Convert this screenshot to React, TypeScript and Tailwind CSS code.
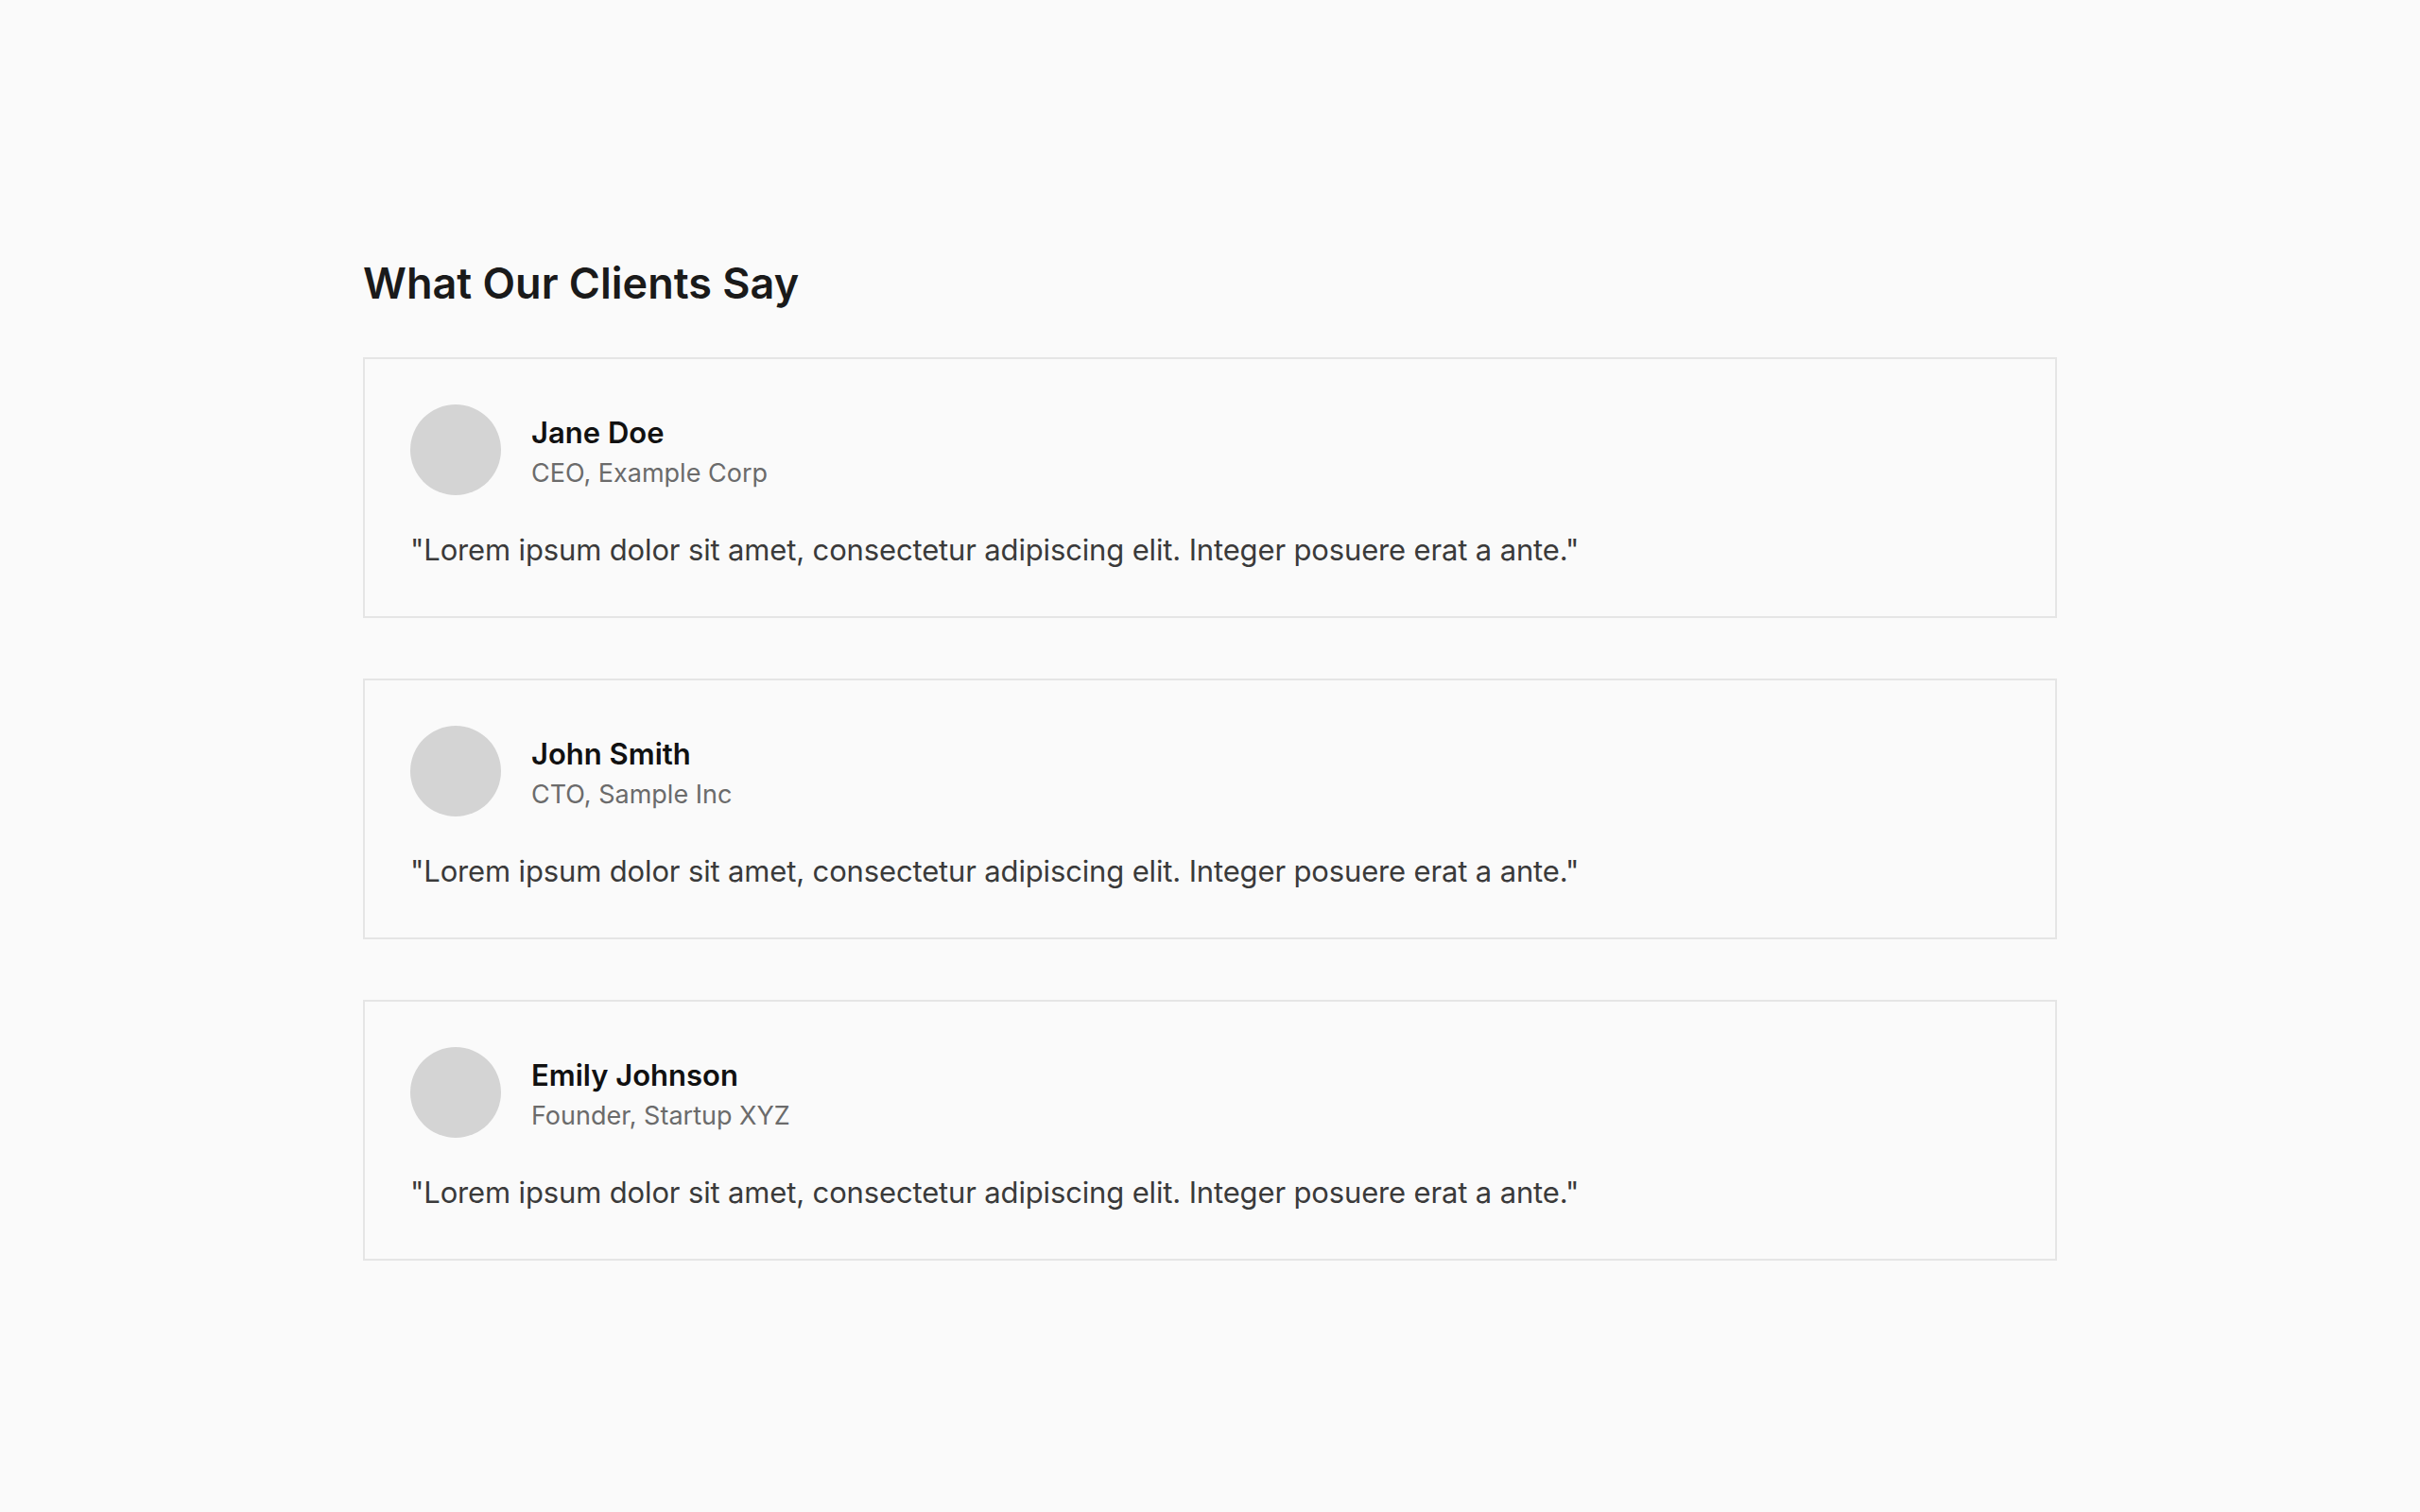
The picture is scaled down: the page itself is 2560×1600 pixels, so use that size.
const testimonials = [
  { name: 'Jane Doe', role: 'CEO, Example Corp' },
  { name: 'John Smith', role: 'CTO, Sample Inc' },
  { name: 'Emily Johnson', role: 'Founder, Startup XYZ' },
];

const quote =
  '"Lorem ipsum dolor sit amet, consectetur adipiscing elit. Integer posuere erat a ante."';

export default function App() {
  return (
    <div
      className="flex min-h-screen items-center justify-center bg-[#fafafa] pt-[3px]"
      style={{ fontFamily: 'Inter, "Noto Sans", sans-serif' }}
    >
      <section className="w-[1792px]">
        <h2 className="mb-12 text-[45px] font-semibold leading-[60px] text-[#1a1a1a]">
          What Our Clients Say
        </h2>
        <div className="flex flex-col gap-16">
          {testimonials.map((t) => (
            <div key={t.name} className="border-2 border-[#e5e5e5] px-12 pb-[46px] pt-12">
              <div className="flex items-center gap-8">
                <div className="h-24 w-24 shrink-0 rounded-full bg-[#d4d4d4]" />
                <div className="pt-[6px]">
                  <p className="text-[31px] font-semibold leading-[42px] text-[#111111]">
                    {t.name}
                  </p>
                  <p className="mt-[2px] text-[27px] leading-[40px] text-[#6b6b6b]">{t.role}</p>
                </div>
              </div>
              <p className="mt-[34px] text-[31px] leading-[48px] tracking-[-0.15px] text-[#3a3a3a]">
                {quote}
              </p>
            </div>
          ))}
        </div>
      </section>
    </div>
  );
}
